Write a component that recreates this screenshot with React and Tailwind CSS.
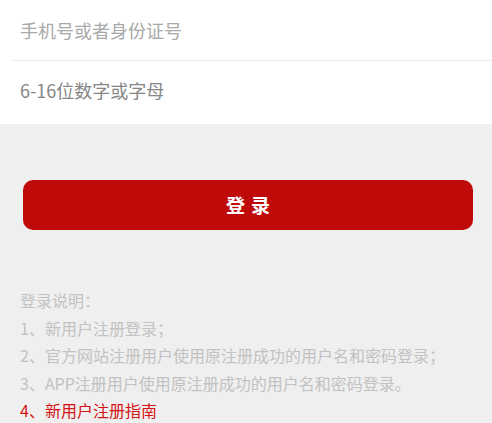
export default function App() {
  const font = { fontFamily: '"Noto Sans CJK SC", "Noto Sans", sans-serif' };
  return (
    <div className="w-[492px] h-[423px] bg-[#efefef] overflow-hidden" style={font}>
      <div className="bg-white">
        <div className="ml-3 h-[61px] flex items-center pl-2 text-[18px] text-[#a8a8a8] border-b border-[#ececec]">
          手机号或者身份证号
        </div>
        <div className="h-[63px] flex items-center pl-5 pb-1 text-[18px] text-[#868686]">
          6-16位数字或字母
        </div>
      </div>
      <div className="pl-[23px] pr-[19px] pt-[56px]">
        <button className="w-full h-[50px] rounded-[10px] bg-[#c00a0a] text-white text-[19px] font-bold tracking-[6px] pl-[6px]">
          登录
        </button>
      </div>
      <div className="px-5 pt-[57px] text-[16px] leading-[27.5px] text-[#c2c2c2]">
        <p>登录说明：</p>
        <p>1、新用户注册登录；</p>
        <p>2、官方网站注册用户使用原注册成功的用户名和密码登录；</p>
        <p>3、APP注册用户使用原注册成功的用户名和密码登录。</p>
        <p className="text-[#d41414]">4、新用户注册指南</p>
      </div>
    </div>
  );
}
